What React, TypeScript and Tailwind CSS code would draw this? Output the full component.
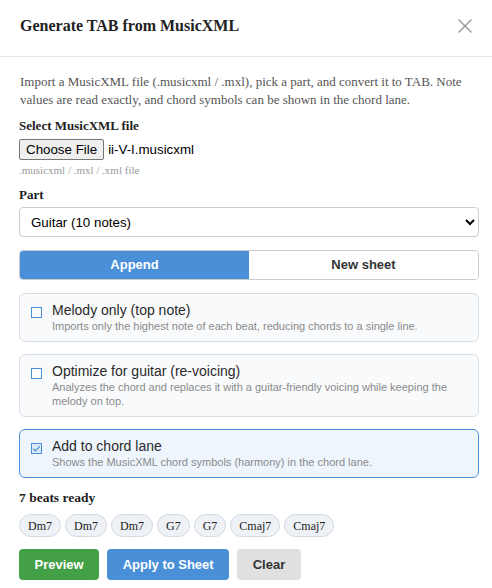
import React, { useState } from "react";
import { X, Check } from "lucide-react";

type Option = {
  id: string;
  title: string;
  desc: string;
};

const options: Option[] = [
  {
    id: "melody",
    title: "Melody only (top note)",
    desc: "Imports only the highest note of each beat, reducing chords to a single line."
  },
  {
    id: "optimize",
    title: "Optimize for guitar (re-voicing)",
    desc: "Analyzes the chord and replaces it with a guitar-friendly voicing while keeping the melody on top."
  },
  {
    id: "chords",
    title: "Add to chord lane",
    desc: "Shows the MusicXML chord symbols (harmony) in the chord lane."
  }
];

const chords = ["Dm7", "Dm7", "Dm7", "G7", "G7", "Cmaj7", "Cmaj7"];

function OptionCard({ opt, checked, onToggle }: { opt: Option; checked: boolean; onToggle: () => void }) {
  return (
    <div
      onClick={onToggle}
      className={
        checked
          ? "flex gap-[10px] rounded-md border border-[#4a90d9] bg-[#eef5fd] pl-[11px] pr-3 pt-[8px] pb-[8px] cursor-pointer"
          : "flex gap-[10px] rounded-md border border-[#d8dee6] bg-[#f9fafc] pl-[11px] pr-3 pt-[8px] pb-[8px] cursor-pointer"
      }
    >
      <div className="pt-[5px]">
        {checked ? (
          <div className="w-[11px] h-[11px] border border-[#4a90d9] bg-[#dbe9fa] flex items-center justify-center">
            <Check className="w-[10px] h-[10px] text-[#4a90d9]" strokeWidth={3} />
          </div>
        ) : (
          <div className="w-[11px] h-[11px] border border-[#4a90d9] bg-white" />
        )}
      </div>
      <div className="flex-1">
        <div className="text-[14px] leading-[17px] text-[#2a2a2a]">{opt.title}</div>
        <div className="text-[11px] leading-[14px] text-[#8a8a8a]">{opt.desc}</div>
      </div>
    </div>
  );
}

export default function App() {
  const [mode, setMode] = useState<"append" | "new">("append");
  const [checked, setChecked] = useState<Record<string, boolean>>({ chords: true });

  return (
    <div className="w-[492px] h-[588px] bg-white overflow-hidden font-['Liberation_Serif',serif] text-[#222]">
      {/* Header */}
      <div className="h-[57px] border-b border-[#e3e3e3] flex items-center justify-between pl-[20px] pr-[15px] pb-[5px]">
        <h2 className="text-[16px] font-bold text-[#222]">Generate TAB from MusicXML</h2>
        <X className="w-6 h-6 text-[#999]" strokeWidth={1.4} />
      </div>

      <div className="pl-[19px] pr-[13px] pt-[16px]">
        <p className="text-[13px] leading-[18px] text-[#555] pl-px">
          Import a MusicXML file (.musicxml / .mxl), pick a part, and convert it to TAB. Note values are read exactly, and chord symbols can be shown in the chord lane.
        </p>

        {/* File */}
        <div className="mt-[9px] text-[13px] leading-[16px] font-bold">Select MusicXML file</div>
        <div className="mt-[5px] flex items-center gap-[4px] font-['Liberation_Sans',sans-serif] text-[13.33px]">
          <div className="h-[21px] px-[6px] flex items-center border border-[#767676] rounded-[2px] bg-[#efefef] text-black">
            Choose File
          </div>
          <span className="text-black">ii-V-I.musicxml</span>
        </div>
        <div className="mt-[4px] text-[11px] leading-[13px] text-[#999]">.musicxml / .mxl / .xml file</div>

        {/* Part */}
        <div className="mt-[10px] text-[13px] leading-[16px] font-bold">Part</div>
        <select className="mt-[4px] w-full h-[30px] rounded-[4px] border border-[#ccc] bg-white pl-[7px] pr-[4px] font-['Liberation_Sans',sans-serif] text-[13.33px] text-black">
          <option>Guitar (10 notes)</option>
        </select>

        {/* Mode toggle */}
        <div className="mt-[13px] flex h-[30px] rounded-[4px] border border-[#ccc] overflow-hidden font-['Liberation_Sans',sans-serif] text-[13px] font-bold">
          <button
            onClick={() => setMode("append")}
            className={mode === "append" ? "flex-1 bg-[#4a90d9] text-white" : "flex-1 bg-white text-[#333]"}
          >
            Append
          </button>
          <button
            onClick={() => setMode("new")}
            className={mode === "new" ? "flex-1 bg-[#4a90d9] text-white" : "flex-1 bg-white text-[#333]"}
          >
            New sheet
          </button>
        </div>

        {/* Options */}
        <div className="mt-[13px] flex flex-col gap-[12px] font-['Liberation_Sans',sans-serif]">
          {options.map((o) => (
            <OptionCard
              key={o.id}
              opt={o}
              checked={!!checked[o.id]}
              onToggle={() => setChecked({ ...checked, [o.id]: !checked[o.id] })}
            />
          ))}
        </div>

        {/* Preview chips */}
        <div className="mt-[11px] text-[13.5px] leading-[18px] font-bold">7 beats ready</div>
        <div className="mt-[7px] flex gap-[4px]">
          {chords.map((c, i) => (
            <span
              key={i}
              className="h-[23px] px-[8px] flex items-center rounded-full border border-[#d3d9e1] bg-[#eef1f5] text-[12px] text-[#222]"
            >
              {c}
            </span>
          ))}
        </div>

        {/* Actions */}
        <div className="mt-[12px] flex gap-[8px] font-['Liberation_Sans',sans-serif] text-[13px] font-bold">
          <button className="h-[31px] px-[15.5px] rounded-[4px] bg-[#43a047] text-white">Preview</button>
          <button className="h-[31px] px-[15.5px] rounded-[4px] bg-[#4a90d9] text-white">Apply to Sheet</button>
          <button className="h-[31px] px-[15.5px] rounded-[4px] bg-[#e0e0e0] text-[#333]">Clear</button>
        </div>
      </div>
    </div>
  );
}
